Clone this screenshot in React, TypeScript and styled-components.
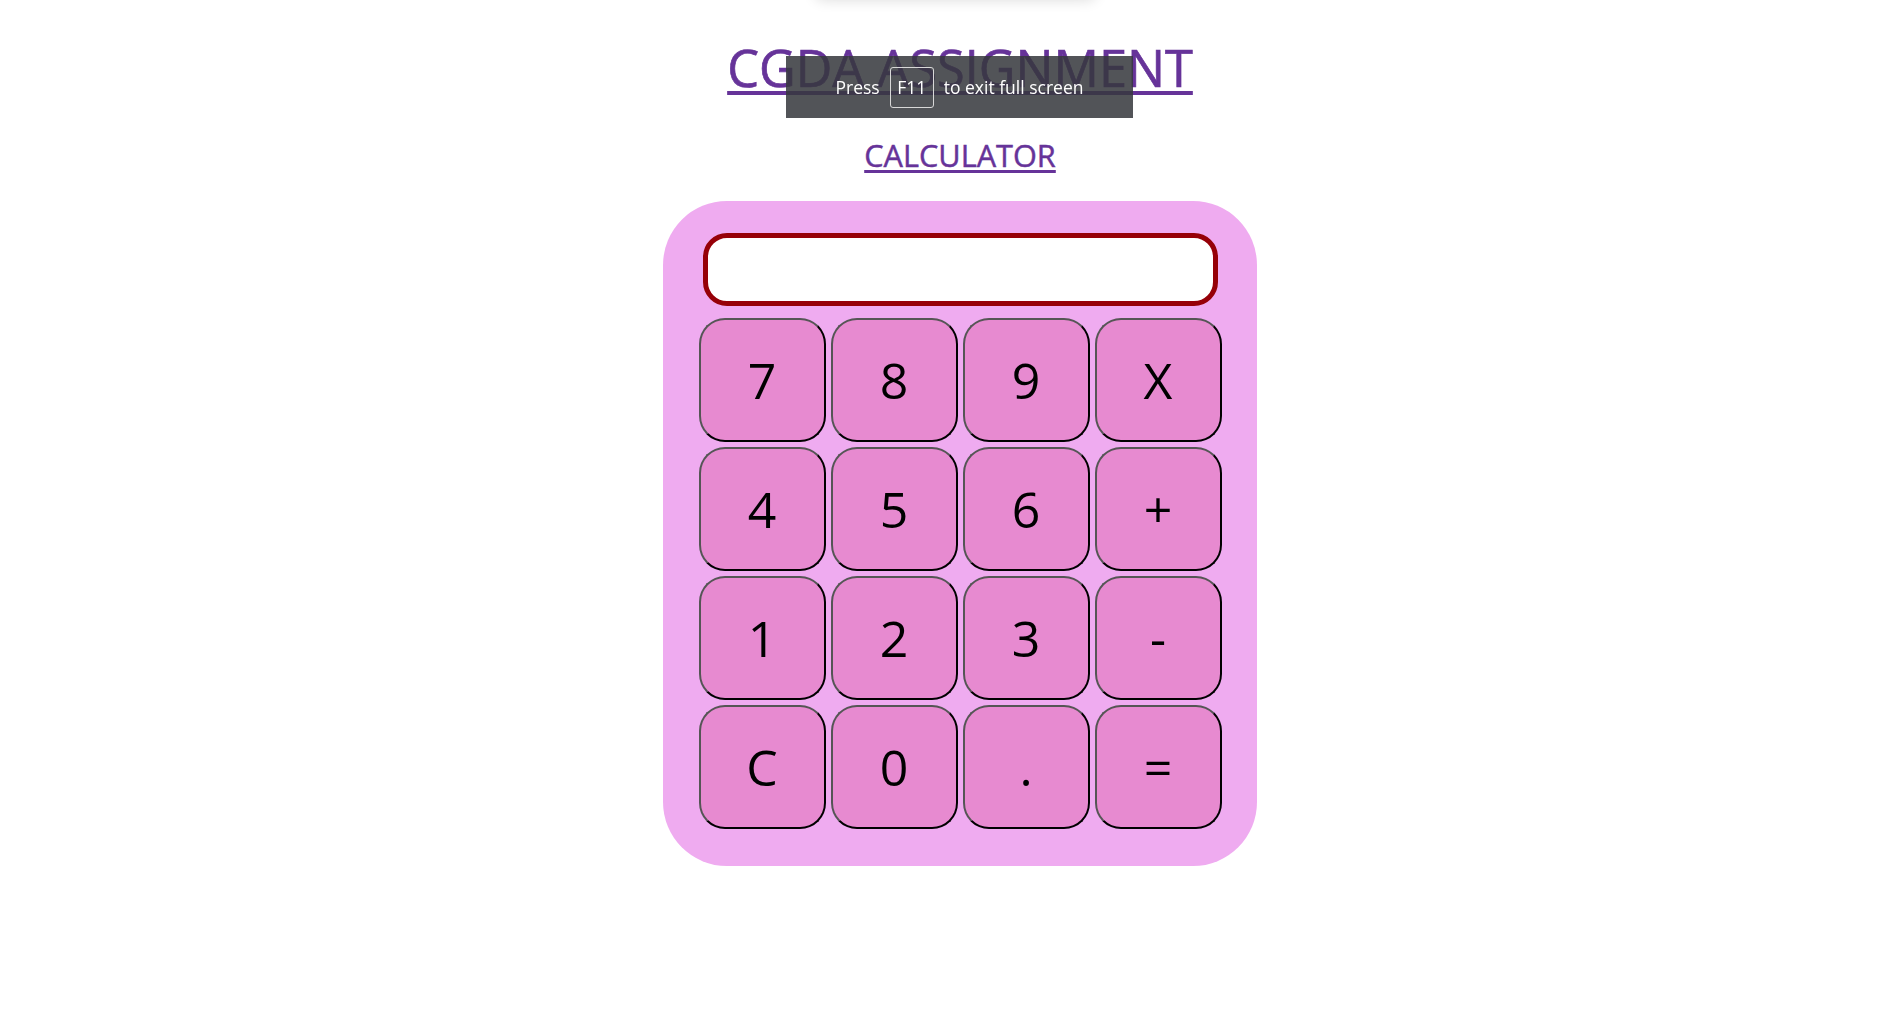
import React from "react";
import styled, { createGlobalStyle } from "styled-components";

const GlobalStyle = createGlobalStyle`
  html, body {
    margin: 0;
    padding: 0;
    background: #ffffff;
    overflow: hidden;
  }
  body {
    font-family: "Open Sans", "Noto Sans", sans-serif;
  }
`;

const Page = styled.main`
  position: relative;
  min-height: 1013px;
  padding-left: 41px;
  display: flex;
  flex-direction: column;
  align-items: center;
`;

const Title = styled.h1`
  margin: 34px 0 0;
  font-size: 50.5px;
  line-height: 68px;
  font-weight: 400;
  -webkit-text-stroke: 0.7px #663399;
  color: #663399;
  text-decoration: underline;
  text-decoration-thickness: 4px;
  text-underline-offset: 4px;
`;

const Subtitle = styled.h2`
  margin: 33px 0 0;
  font-size: 30.7px;
  line-height: 41px;
  font-weight: 400;
  -webkit-text-stroke: 0.45px #663399;
  color: #663399;
  text-decoration: underline;
  text-decoration-thickness: 3px;
  text-underline-offset: 3px;
`;

const Calculator = styled.section`
  box-sizing: border-box;
  margin-top: 25px;
  width: 594px;
  padding: 32px 35px 37px 35px;
  border-radius: 64px;
  background: #efabf0;
  display: flex;
  flex-direction: column;
  align-items: center;
  gap: 12px;
`;

const Display = styled.input`
  box-sizing: border-box;
  width: 515px;
  height: 73px;
  border: 5px solid #960008;
  border-radius: 24px;
  background: #ffffff;
  outline: none;
  font-family: "Open Sans", sans-serif;
  font-size: 32px;
  padding: 0 18px;
  text-align: right;
`;

const Keys = styled.div`
  display: grid;
  grid-template-columns: repeat(4, 127px);
  grid-auto-rows: 124px;
  column-gap: 5px;
  row-gap: 5px;
`;

const Key = styled.button`
  box-sizing: border-box;
  margin: 0;
  padding: 0;
  border: 2px solid;
  border-color: #555555 #000000 #000000 #555555;
  border-radius: 26px;
  background: #e78ad0;
  color: #000000;
  font-family: "Open Sans", sans-serif;
  font-size: 50px;
  font-weight: 400;
  line-height: 1;
  display: flex;
  align-items: center;
  justify-content: center;
  cursor: pointer;
`;

const TopShadow = styled.div`
  position: fixed;
  top: -30px;
  left: 815px;
  width: 281px;
  height: 30px;
  border-radius: 8px;
  box-shadow: 0 0 14px rgba(0, 0, 0, 0.14);
  background: #ffffff;
`;

const FullscreenNotice = styled.div`
  position: fixed;
  top: 56px;
  left: 786px;
  width: 347px;
  height: 62px;
  box-sizing: border-box;
  background: rgba(53, 56, 61, 0.86);
  color: #ffffff;
  font-family: "Open Sans", "Noto Sans", sans-serif;
  font-size: 17.5px;
  display: flex;
  align-items: center;
  justify-content: center;
  gap: 10px;
`;

const KeyCap = styled.span`
  box-sizing: border-box;
  width: 44px;
  height: 41px;
  border: 1px solid #d8d8d8;
  border-radius: 3px;
  display: flex;
  align-items: center;
  justify-content: center;
`;

const keys = ["7", "8", "9", "X", "4", "5", "6", "+", "1", "2", "3", "-", "C", "0", ".", "="];

export default function App() {
  return (
    <>
      <GlobalStyle />
      <Page>
        <Title>CGDA ASSIGNMENT</Title>
        <Subtitle>CALCULATOR</Subtitle>
        <Calculator>
          <Display type="text" readOnly />
          <Keys>
            {keys.map((k) => (
              <Key key={k}>{k}</Key>
            ))}
          </Keys>
        </Calculator>
      </Page>
      <TopShadow />
      <FullscreenNotice>
        <span>Press</span>
        <KeyCap>F11</KeyCap>
        <span>to exit full screen</span>
      </FullscreenNotice>
    </>
  );
}
